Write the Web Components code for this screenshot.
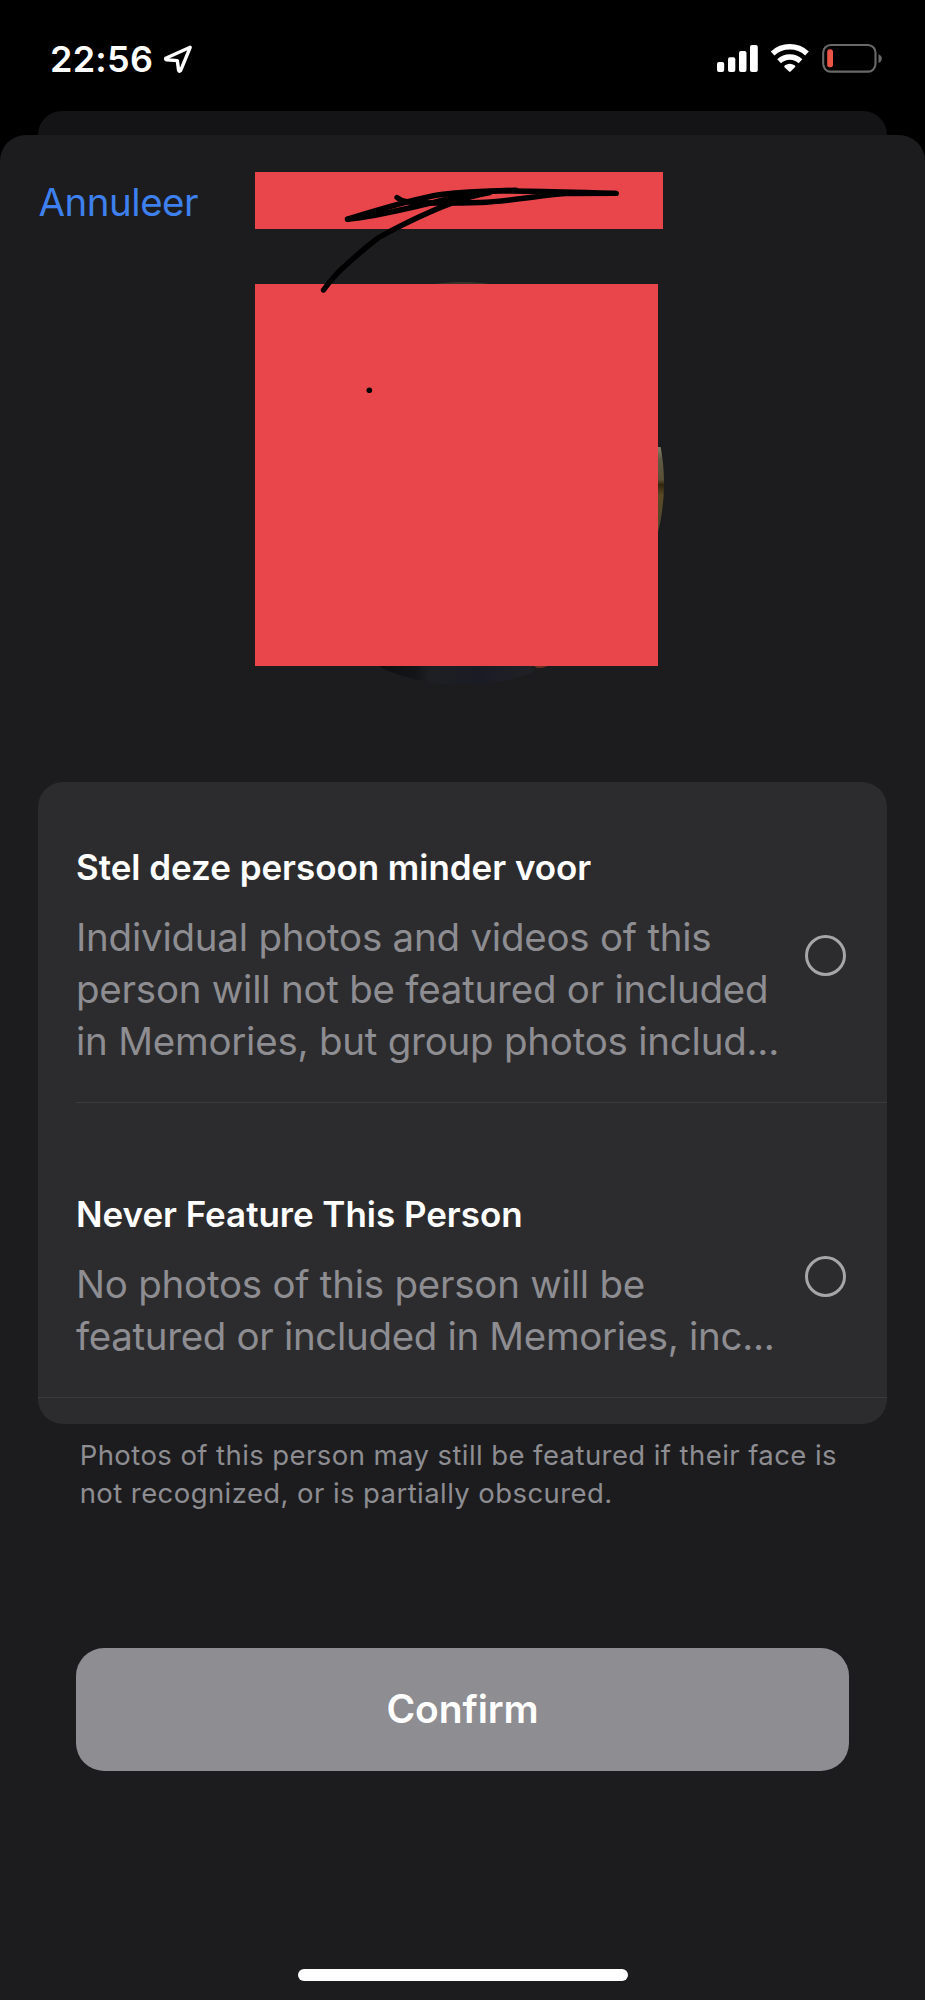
<!DOCTYPE html>
<html lang="nl">
<head>
<meta charset="utf-8">
<title>Feature less</title>
<style>
  html, body { margin: 0; background: #000; }
  body { font-family: Inter, "Liberation Sans", sans-serif; color: #fff; }
</style>
</head>
<body>
<phone-screen>
  <status-bar slot="status" time="22:56"></status-bar>
  <person-header slot="header">Annuleer</person-header>
  <option-card slot="content">
    <option-row heading="Stel deze persoon minder voor" style="--row-height:320px;--text-top:63px;--radio-top:153px">
      <desc-line>Individual photos and videos of this</desc-line>
      <desc-line>person will not be featured or included</desc-line>
      <desc-line>in Memories, but group photos includ...</desc-line>
    </option-row>
    <option-row heading="Never Feature This Person" style="--row-height:294px;--text-top:89px;--radio-top:153px">
      <desc-line>No photos of this person will be</desc-line>
      <desc-line style="letter-spacing:-.34px">featured or included in Memories, inc...</desc-line>
    </option-row>
  </option-card>
  <foot-note slot="content">Photos of this person may still be featured if their face is<br>not recognized, or is partially obscured.</foot-note>
  <confirm-button slot="content">Confirm</confirm-button>
  <home-indicator slot="bottom"></home-indicator>
</phone-screen>

<script>
const define = (name, html, fill) => customElements.define(name, class extends HTMLElement {
  connectedCallback() {
    if (this.shadowRoot) return;
    this.attachShadow({ mode: 'open' }).innerHTML = html;
    if (fill) fill(this, this.shadowRoot);
  }
});

define('phone-screen', `
<style>
  :host { display: flex; flex-direction: column; width: 925px; height: 2000px; background: #000; overflow: hidden; }
  .back { height: 24px; margin: 0 38px; background: #141416; border-radius: 24px 24px 0 0; flex: none; }
  .sheet { flex: 1; display: flex; flex-direction: column; background: #1c1c1e; border-radius: 26px 26px 0 0; }
  .space { flex: 1; }
</style>
<slot name="status"></slot>
<div class="back"></div>
<div class="sheet">
  <slot name="header"></slot>
  <slot name="content"></slot>
  <div class="space"></div>
  <slot name="bottom"></slot>
</div>`);

define('status-bar', `
<style>
  :host { display: flex; height: 111px; flex: none; box-sizing: border-box; padding: 37px 43px 0 50px; justify-content: space-between; }
  .left { display: flex; }
  time { font-size: 36px; font-weight: 600; line-height: 44px; letter-spacing: .25px; width: 112px; }
  svg { display: block; }
</style>
<div class="left"><time></time>
<svg width="34" height="40" viewBox="162 37 34 40" fill="none" stroke="#fff" stroke-width="3.4" stroke-linejoin="round"><path d="M190.2 47.3 L165.7 58.3 Q165.3 59.6 166.6 59.8 L177.3 60.6 L178.6 70.3 Q179.2 72 180.6 70.6 Z"/></svg></div>
<svg width="170" height="40" viewBox="712 37 170 40">
  <g fill="#fff"><rect x="717" y="62" width="7.2" height="10" rx="2"/><rect x="728" y="57.3" width="7.3" height="14.7" rx="2"/><rect x="739" y="51" width="7.5" height="21" rx="2"/><rect x="750" y="45" width="7.8" height="27" rx="2"/></g>
  <g fill="none" stroke="#fff" stroke-width="5.4"><path d="M772.6 53.4 A25.5 25.5 0 0 1 807 53.4"/><path d="M779.1 61.3 A15.6 15.6 0 0 1 800.5 61.3"/></g>
  <path d="M784.3 67 Q784 66 785 65.3 Q789.8 62 794.6 65.3 Q795.6 66 795.2 67 L790.6 71.5 Q789.8 72.2 789 71.5 Z" fill="#fff"/>
  <rect x="823.2" y="45" width="52.3" height="26.600" rx="7.5" fill="none" stroke="#69696a" stroke-width="2.1"/>
  <rect x="827.2" y="49.3" width="5.8" height="18" rx="2.5" fill="#eb5545"/>
  <path d="M878.5 54.3 Q881.8 55.5 881.8 58.6 Q881.8 61.7 878.5 63 Z" fill="#69696a"/>
</svg>`, (el, root) => root.querySelector('time').textContent = el.getAttribute('time'));

define('person-header', `
<style>
  :host { display: grid; grid-template-columns: 255px 408px; grid-template-rows: 57px 55px 382px; box-sizing: border-box; padding-top: 37px; height: 610px; position: relative; flex: none; }
  .cancel { color: #3d80ee; font-size: 38.5px; line-height: 52px; letter-spacing: -.5px; padding-left: 38.5px; margin-top: 4px; white-space: nowrap; }
  .name { width: 407.5px; background: #e8464a; }
  .portrait { grid-column: 2; grid-row: 3; width: 403px; background: #e8464a; }
  svg { position: absolute; left: 0; top: 0; }
  .photo { z-index: 0; } .name, .portrait { z-index: 1; } .ink { z-index: 2; }
</style>
<svg class="photo" width="925" height="610" viewBox="0 135 925 610">
  <defs>
    <clipPath id="c"><circle cx="462.5" cy="483.500" r="201.5"/></clipPath>
    <linearGradient id="g" x1="0" y1="0" x2="0" y2="1"><stop offset="0" stop-color="#84816b"/><stop offset=".14" stop-color="#5f5a44"/><stop offset=".38" stop-color="#5a5036"/><stop offset=".44" stop-color="#33260f"/><stop offset=".56" stop-color="#5a4a25"/><stop offset="1" stop-color="#4c4830"/></linearGradient>
    <linearGradient id="b"><stop offset="0" stop-color="#101012"/><stop offset=".22" stop-color="#141518"/><stop offset=".3" stop-color="#1e1f23"/><stop offset=".6" stop-color="#1b1b25"/><stop offset=".9" stop-color="#202126"/><stop offset=".94" stop-color="#1c1c1e"/></linearGradient>
  </defs>
  <g clip-path="url(#c)">
    <rect x="655" y="447" width="12" height="86" fill="url(#g)"/>
    <rect x="380" y="660" width="166" height="24" fill="url(#b)"/>
    <path d="M534 666 h14 l-6 2 h-5 Z" fill="#6a3022"/>
    <rect x="436" y="280" width="56" height="6" fill="#39352a"/>
  </g>
</svg>
<div class="cancel"><slot></slot></div>
<div class="name"></div>
<div class="portrait"></div>
<svg class="ink" width="925" height="610" viewBox="0 135 925 610" fill="none" stroke="#000" stroke-width="5.4" stroke-linecap="round" stroke-linejoin="round">
  <path d="M397 197.5 Q402 201.5 408 202 C430 203.500 455 203.2 480 202.500 C512 201 540 195.500 565 193.600 L616 193.400"/>
  <path d="M616 193.400 C575 192.500 540 191 510 191 C480 190.500 460 192 441 194.500 C415 198.500 385 207.500 347.500 219.200"/>
  <path d="M347.500 219.200 C375 216.500 400 210 427 204 C455 197 475 190.500 516 190.200"/>
  <path d="M490 192.500 C468 196 448 204 430 212 C413 219.500 392 230 378 238 C365 248 350 261 338 272.500 Q330 281 323.500 290"/>
  <circle cx="369.3" cy="390.3" r="2.8" fill="#000" stroke="none"/>
</svg>`);

define('option-card', `
<style>
  :host { display: block; box-sizing: border-box; width: 849px; height: 642px; margin: 37px 0 0 38px; background: #2c2c2e; border-radius: 25px; overflow: hidden; flex: none; }
</style>
<slot></slot>`);

define('option-row', `
<style>
  :host { display: flex; justify-content: space-between; height: var(--row-height); border-bottom: 1px solid #3b3b3e; margin-left: 38px; padding-right: 41px; }
  :host(:last-of-type) { margin-left: 0; padding-left: 38px; }
  .text { padding-top: var(--text-top); }
  h2 { margin: 0 0 22px; font-size: 35px; line-height: 44px; font-weight: 600; letter-spacing: -.04px; white-space: nowrap; }
  .radio { box-sizing: border-box; width: 41px; height: 41px; margin-top: var(--radio-top); border: 3px solid #a6a6a9; border-radius: 50%; flex: none; }
</style>
<div class="text"><h2></h2><slot></slot></div>
<div class="radio"></div>`, (el, root) => root.querySelector('h2').textContent = el.getAttribute('heading'));

define('desc-line', `
<style>
  :host { display: block; color: #8d8d92; font-size: 38.5px; line-height: 52.1px; letter-spacing: -.24px; white-space: nowrap; }
</style>
<slot></slot>`);

define('foot-note', `
<style>
  :host { display: block; margin: 11.5px 0 0 79.7px; color: #8d8d92; font-size: 27.5px; line-height: 38px; letter-spacing: .42px; white-space: nowrap; flex: none; }
</style>
<slot></slot>`);

define('confirm-button', `
<style>
  :host { display: flex; align-items: center; justify-content: center; box-sizing: border-box; width: 773px; height: 123.5px; margin: 136px 0 0 76px; padding-bottom: 1px; background: #8e8d92; border-radius: 28px; font-size: 39px; font-weight: 600; letter-spacing: -.13px; flex: none; }
</style>
<slot></slot>`);

define('home-indicator', `
<style>
  :host { display: block; width: 330px; height: 12px; margin: 0 auto 19px 298px; background: #fff; border-radius: 6px; flex: none; }
</style>`);
</script>
</body>
</html>
